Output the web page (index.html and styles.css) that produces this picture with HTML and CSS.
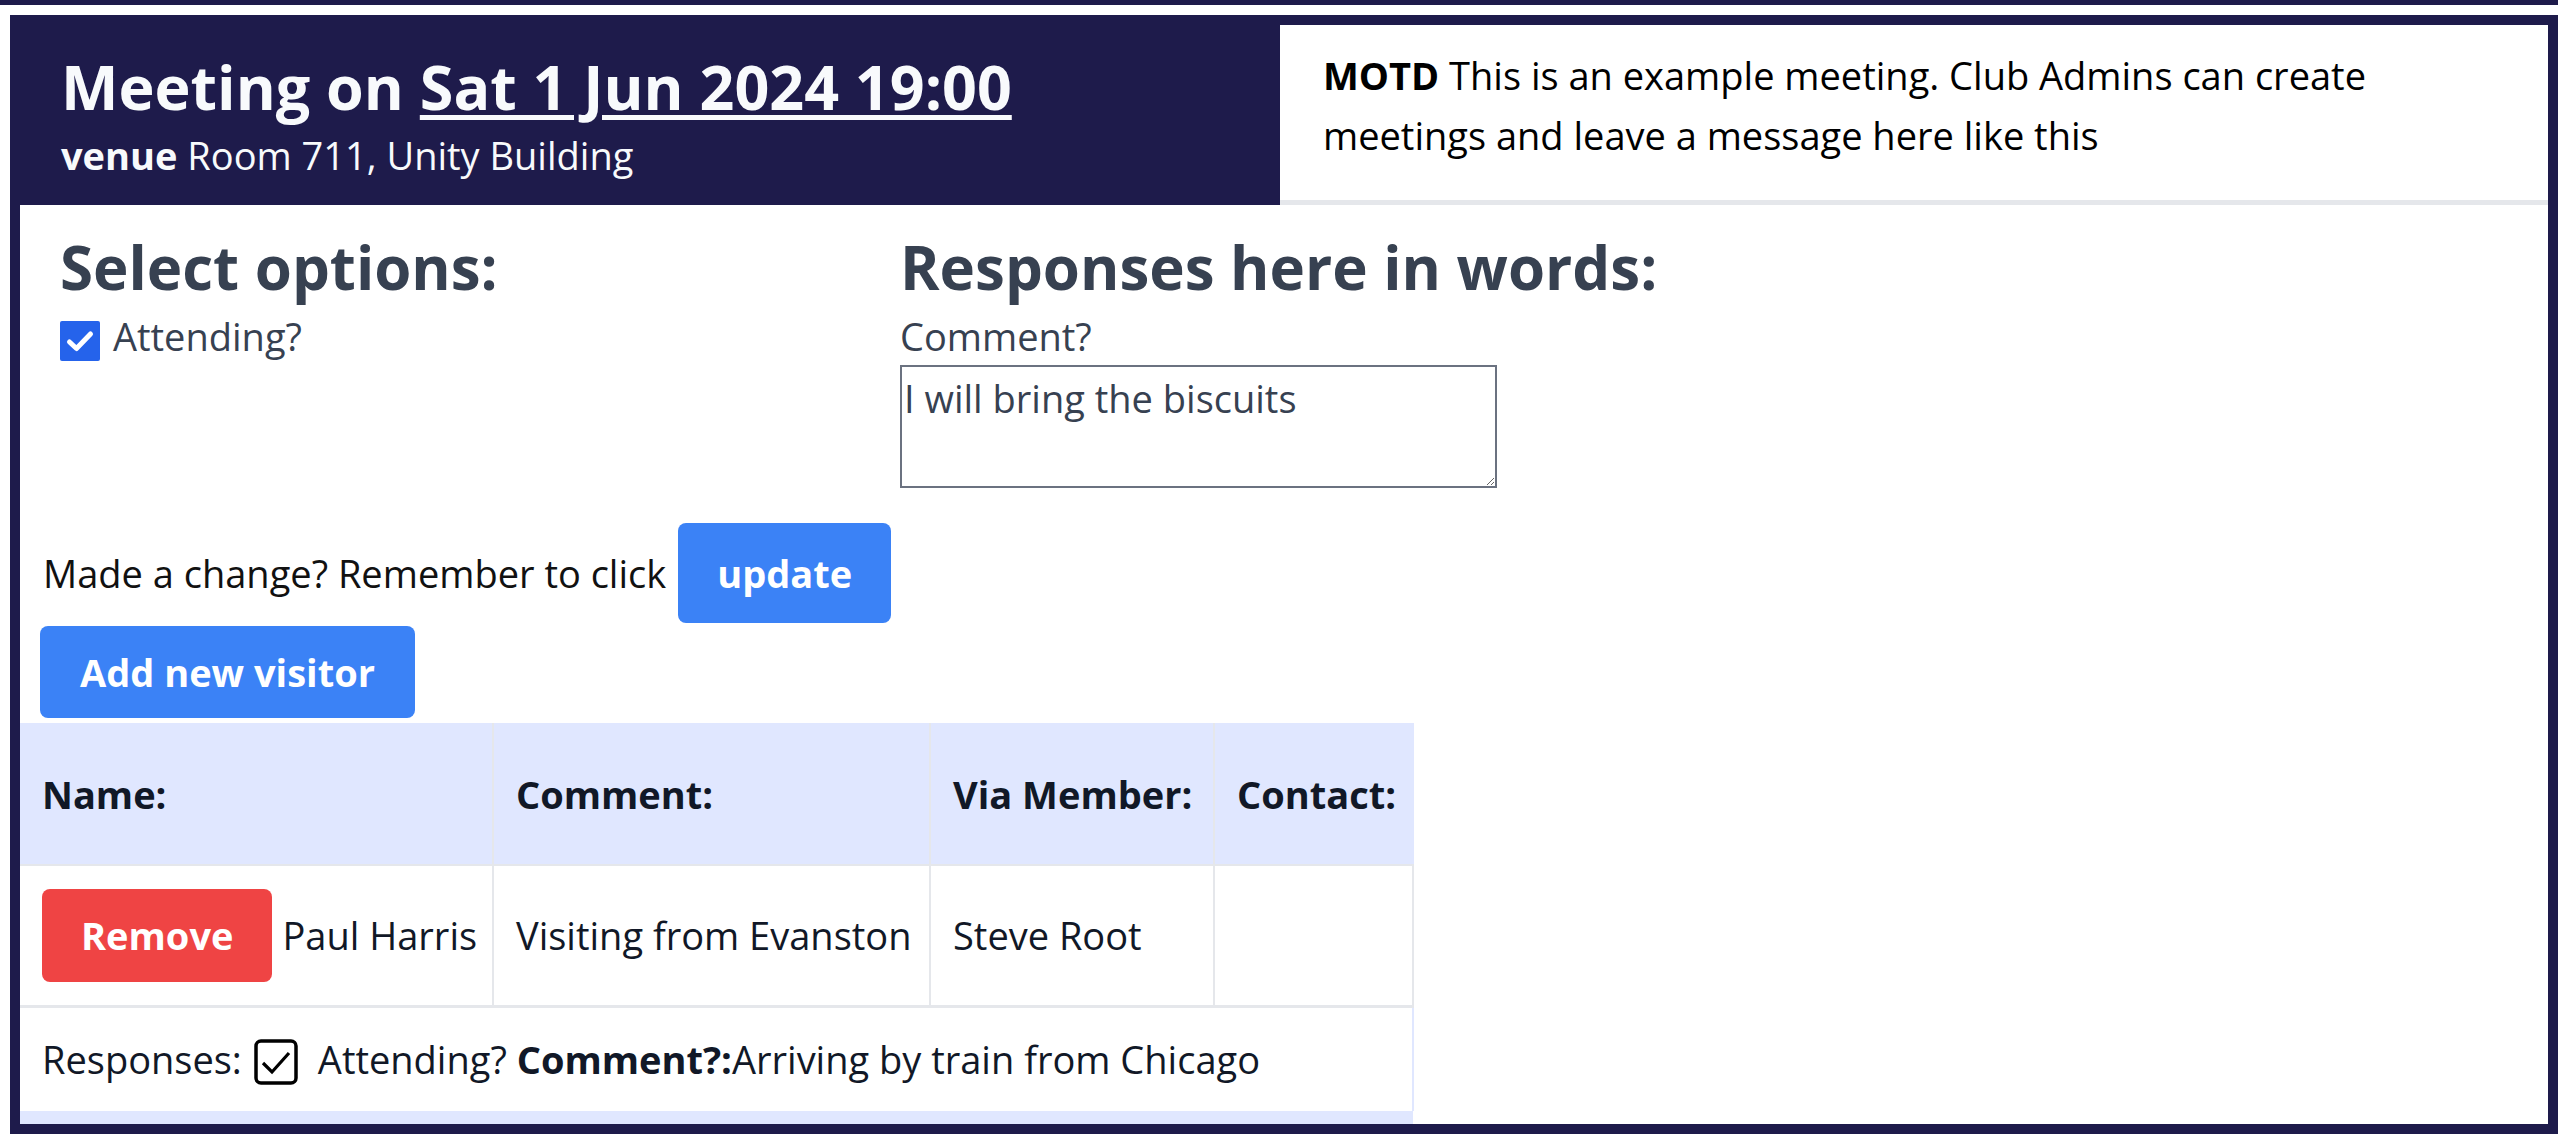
FILE: index.html
```html
<!DOCTYPE html>
<html lang="en">
<head>
<meta charset="utf-8">
<title>Meeting</title>
<link rel="stylesheet" href="styles.css">
</head>
<body>
<div class="prev-meeting"></div>
<section class="meeting">
  <header class="meeting-head">
    <div class="title-cell">
      <h1 class="title">Meeting on <u>Sat 1 Jun 2024 19:00</u></h1>
      <p class="venue"><b>venue</b> Room 711, Unity Building</p>
    </div>
    <div class="motd"><b>MOTD</b> This is an example meeting. Club Admins can create meetings and leave a message here like this</div>
  </header>

  <div class="options">
    <div class="col">
      <h2 class="col-title">Select options:</h2>
      <label class="check-row">
        <span class="cb"><svg viewBox="0 0 40 40" width="40" height="40"><polyline points="9.5,21 16.5,27.5 30.5,13" fill="none" stroke="#fff" stroke-width="5" stroke-linecap="round" stroke-linejoin="round"/></svg></span>
        <span>Attending?</span>
      </label>
    </div>
    <div class="col">
      <h2 class="col-title">Responses here in words:</h2>
      <label class="field-label">Comment?</label>
      <textarea class="comment">I will bring the biscuits</textarea>
    </div>
    <div class="col"></div>
  </div>

  <div class="update-row"><span>Made a change? Remember to click</span><button class="btn btn-blue btn-update">update</button></div>
  <button class="btn btn-blue btn-add">Add new visitor</button>

  <table class="visitors">
    <colgroup>
      <col class="c-name"><col class="c-comment"><col class="c-via"><col class="c-contact">
    </colgroup>
    <thead>
      <tr><th>Name:</th><th>Comment:</th><th>Via Member:</th><th>Contact:</th></tr>
    </thead>
    <tbody>
      <tr class="visitor-row">
        <td><div class="name-cell"><button class="btn btn-red">Remove</button><span>Paul Harris</span></div></td>
        <td>Visiting from Evanston</td>
        <td>Steve Root</td>
        <td></td>
      </tr>
      <tr class="responses-row">
        <td colspan="4">Responses:<svg class="mini-cb" viewBox="0 0 44 46" width="44" height="46"><rect x="2" y="2" width="40" height="42" rx="5" fill="none" stroke="#000" stroke-width="3.5"/><polyline points="9,24 18,33 35,14" fill="none" stroke="#000" stroke-width="3.2"/></svg>Attending? <b>Comment?:</b>Arriving by train from Chicago</td>
      </tr>
      <tr class="next-row"><td colspan="4"></td></tr>
    </tbody>
  </table>
</section>
</body>
</html>
```

FILE: styles.css
```css
* { box-sizing: border-box; }

body {
  margin: 0;
  background: #ffffff;
  font-family: "Open Sans", "Noto Sans", sans-serif;
  color: #111827;
}

.prev-meeting {
  height: 5px;
  background: #1e1b4b;
}

.meeting {
  margin: 10px 0 0 10px;
  border: 10px solid #1e1b4b;
  height: 1119px;
  overflow: hidden;
}

.meeting-head {
  display: grid;
  grid-template-columns: 1260px 1fr;
  height: 180px;
}

.title-cell {
  background: #1e1b4b;
  color: #f8fafc;
  padding: 20px 0 0 41px;
}

.title {
  margin: 0;
  font-size: 61px;
  line-height: 83px;
  font-weight: 700;
  white-space: nowrap;
}

.title u {
  text-decoration-thickness: 5px;
  text-underline-offset: 5px;
}

.venue {
  margin: 1px 0 0;
  font-size: 38px;
  line-height: 52px;
}

.motd {
  background: #ffffff;
  border-bottom: 5px solid #e5e7eb;
  padding: 20px 40px 0 43px;
  font-size: 38px;
  line-height: 60px;
  color: #000000;
}

.options {
  display: grid;
  grid-template-columns: repeat(3, 840px);
  padding-top: 21px;
}

.col {
  padding: 0 40px;
}

.col-title {
  margin: 0 0 1px;
  font-size: 60px;
  line-height: 82px;
  font-weight: 700;
  color: #374151;
  white-space: nowrap;
}

.check-row {
  display: flex;
  align-items: center;
  gap: 13px;
  font-size: 38px;
  line-height: 54px;
  color: #374151;
}

.cb {
  width: 40px;
  height: 40px;
  margin-top: 10px;
  background: #2563eb;
  border-radius: 2px;
  display: flex;
}

.field-label {
  display: block;
  font-size: 38px;
  line-height: 54px;
  color: #374151;
}

.comment {
  display: block;
  margin-top: 2px;
  width: 597px;
  height: 123px;
  border: 2px solid #6b7280;
  border-radius: 0;
  padding: 4px 2px;
  font-family: "Open Sans", "Noto Sans", sans-serif;
  font-size: 38px;
  line-height: 54px;
  color: #374151;
  background: #ffffff;
}

.update-row {
  display: flex;
  align-items: center;
  gap: 12px;
  margin-top: 35px;
  padding-left: 23px;
  font-size: 38px;
  line-height: 54px;
  color: #111111;
}

.btn {
  border: none;
  border-radius: 8px;
  color: #ffffff;
  font-family: "Open Sans", "Noto Sans", sans-serif;
  font-weight: 700;
  font-size: 38px;
  line-height: 54px;
  cursor: pointer;
}

.btn-blue { background: #3b82f6; }
.btn-red { background: #ef4444; }

.btn-update {
  height: 100px;
  padding: 0 39px;
}

.btn-add {
  display: block;
  margin: 3px 0 0 20px;
  height: 92px;
  padding: 0 40px;
}

.visitors {
  margin-top: 5px;
  border-collapse: collapse;
  table-layout: fixed;
  width: 1393px;
  font-size: 38px;
  line-height: 54px;
  color: #111827;
}

.c-name { width: 473px; }
.c-comment { width: 437px; }
.c-via { width: 284px; }
.c-contact { width: 199px; }

.visitors th {
  background: #e0e7ff;
  height: 142px;
  padding: 0 22px;
  text-align: left;
  font-weight: 700;
  border: 2px solid #e5e7eb;
  border-top: none;
  border-left: none;
  white-space: nowrap;
}

.visitors th:last-child { border-right: 2px solid #e0e7ff; }

.visitor-row td {
  height: 141px;
  padding: 0 22px;
  border: 2px solid #e5e7eb;
  border-left: none;
  white-space: nowrap;
}

.name-cell {
  display: flex;
  align-items: center;
  gap: 10px;
}

.btn-red {
  height: 93px;
  padding: 0 39px;
}

.responses-row td {
  height: 105px;
  padding: 0 22px;
  border-top: 3px solid #e5e7eb;
  border-right: 2px solid #e0e7ff;
  white-space: nowrap;
}

.mini-cb {
  vertical-align: middle;
  margin: -4px 20px 0 12px;
}

.next-row td {
  height: 40px;
  background: #e0e7ff;
}
```
